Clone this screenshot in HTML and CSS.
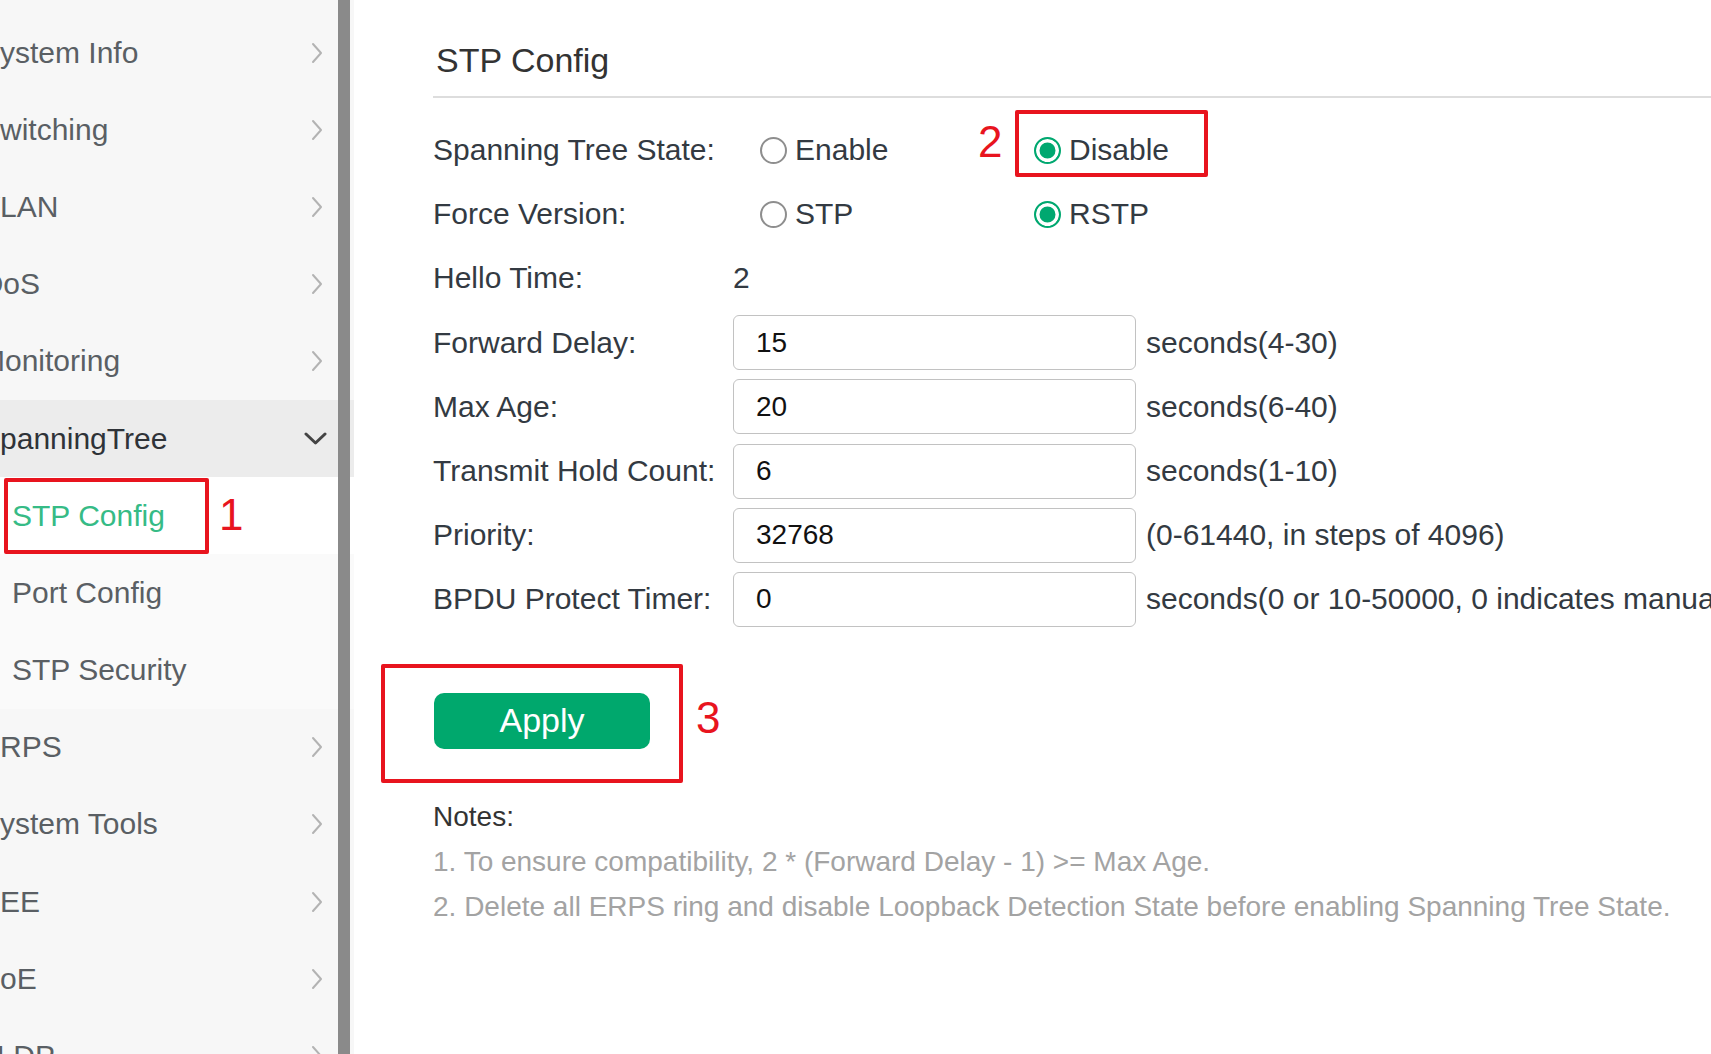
FILE: index.html
```html
<!DOCTYPE html>
<html lang="en">
<head>
<meta charset="utf-8">
<title>STP Config</title>
<link rel="stylesheet" href="styles.css">
</head>
<body>
<div class="app">
  <aside class="sidebar">
    <ul class="nav">
      <li class="nav-item"><span class="nav-label">System Info</span><svg class="chev" viewBox="0 0 12 22"><polyline points="2,2 10,11 2,20"/></svg></li>
      <li class="nav-item"><span class="nav-label">Switching</span><svg class="chev" viewBox="0 0 12 22"><polyline points="2,2 10,11 2,20"/></svg></li>
      <li class="nav-item"><span class="nav-label">VLAN</span><svg class="chev" viewBox="0 0 12 22"><polyline points="2,2 10,11 2,20"/></svg></li>
      <li class="nav-item"><span class="nav-label">QoS</span><svg class="chev" viewBox="0 0 12 22"><polyline points="2,2 10,11 2,20"/></svg></li>
      <li class="nav-item"><span class="nav-label">Monitoring</span><svg class="chev" viewBox="0 0 12 22"><polyline points="2,2 10,11 2,20"/></svg></li>
      <li class="nav-item open"><span class="nav-label">SpanningTree</span><svg class="chev-down" viewBox="0 0 23 14"><polyline points="2,2 11.5,11 21,2"/></svg></li>
      <li class="sub-item active"><span class="sub-label">STP Config</span><span class="annot-box box-1"></span><span class="annot-num num-1">1</span></li>
      <li class="sub-item"><span class="sub-label">Port Config</span></li>
      <li class="sub-item"><span class="sub-label">STP Security</span></li>
      <li class="nav-item"><span class="nav-label">ERPS</span><svg class="chev" viewBox="0 0 12 22"><polyline points="2,2 10,11 2,20"/></svg></li>
      <li class="nav-item"><span class="nav-label">System Tools</span><svg class="chev" viewBox="0 0 12 22"><polyline points="2,2 10,11 2,20"/></svg></li>
      <li class="nav-item"><span class="nav-label">EEE</span><svg class="chev" viewBox="0 0 12 22"><polyline points="2,2 10,11 2,20"/></svg></li>
      <li class="nav-item"><span class="nav-label">PoE</span><svg class="chev" viewBox="0 0 12 22"><polyline points="2,2 10,11 2,20"/></svg></li>
      <li class="nav-item"><span class="nav-label">LLDP</span><svg class="chev" viewBox="0 0 12 22"><polyline points="2,2 10,11 2,20"/></svg></li>
    </ul>
    <div class="scrollbar"></div>
  </aside>

  <main class="main">
    <h1 class="title">STP Config</h1>
    <div class="divider"></div>

    <div class="form">
      <div class="row">
        <div class="label">Spanning Tree State:</div>
        <div class="radio-group">
          <label class="radio-opt"><span class="radio"></span><span class="radio-text">Enable</span></label>
          <label class="radio-opt"><span class="radio checked"></span><span class="radio-text">Disable</span><span class="annot-box box-2"></span><span class="annot-num num-2">2</span></label>
        </div>
      </div>
      <div class="row">
        <div class="label">Force Version:</div>
        <div class="radio-group">
          <label class="radio-opt"><span class="radio"></span><span class="radio-text">STP</span></label>
          <label class="radio-opt"><span class="radio checked"></span><span class="radio-text">RSTP</span></label>
        </div>
      </div>
      <div class="row">
        <div class="label">Hello Time:</div>
        <div class="value">2</div>
      </div>
      <div class="row">
        <div class="label">Forward Delay:</div>
        <div class="field">15</div>
        <div class="hint">seconds(4-30)</div>
      </div>
      <div class="row">
        <div class="label">Max Age:</div>
        <div class="field">20</div>
        <div class="hint">seconds(6-40)</div>
      </div>
      <div class="row">
        <div class="label">Transmit Hold Count:</div>
        <div class="field">6</div>
        <div class="hint">seconds(1-10)</div>
      </div>
      <div class="row">
        <div class="label">Priority:</div>
        <div class="field">32768</div>
        <div class="hint">(0-61440, in steps of 4096)</div>
      </div>
      <div class="row">
        <div class="label">BPDU Protect Timer:</div>
        <div class="field">0</div>
        <div class="hint">seconds(0 or 10-50000, 0 indicates manual recovery)</div>
      </div>
    </div>

    <div class="apply-wrap">
      <button class="apply">Apply</button>
      <span class="annot-box box-3"></span>
      <span class="annot-num num-3">3</span>
    </div>

    <div class="notes">
      <div class="notes-title">Notes:</div>
      <div class="note">1. To ensure compatibility, 2 * (Forward Delay - 1) &gt;= Max Age.</div>
      <div class="note">2. Delete all ERPS ring and disable Loopback Detection State before enabling Spanning Tree State.</div>
    </div>
  </main>
</div>
</body>
</html>
```
FILE: styles.css
```css
* { box-sizing: border-box; }

html, body {
  margin: 0;
  padding: 0;
  background: #ffffff;
}

body {
  width: 1711px;
  height: 1054px;
  overflow: hidden;
  font-family: "Liberation Sans", Arial, sans-serif;
  color: #333333;
}

.app {
  display: flex;
  height: 1054px;
}

/* ---------- Sidebar ---------- */
.sidebar {
  position: relative;
  width: 354px;
  flex: 0 0 354px;
  height: 100%;
  background: #f7f7f7;
  overflow: hidden;
}

.nav {
  list-style: none;
  margin: 0;
  padding: 14px 0 0 0;
}

.nav-item,
.sub-item {
  position: relative;
  height: 77.2px;
  display: flex;
  align-items: center;
  justify-content: space-between;
  font-size: 30px;
  white-space: nowrap;
}

.nav-item {
  padding-right: 31px;
  color: #5a5f64;
}

.nav-label {
  margin-left: -20px;
}

.nav-item.open {
  background: #ececec;
  color: #2f3338;
}

.chev {
  width: 12px;
  height: 22px;
  flex: 0 0 auto;
}

.chev polyline {
  fill: none;
  stroke: #b3b3b3;
  stroke-width: 2;
  stroke-linecap: round;
  stroke-linejoin: round;
}

.chev-down {
  width: 23px;
  height: 14px;
  margin-right: -4px;
  flex: 0 0 auto;
}

.chev-down polyline {
  fill: none;
  stroke: #444444;
  stroke-width: 3;
  stroke-linecap: round;
  stroke-linejoin: round;
}

.sub-item {
  background: #fafafa;
  color: #5a5f64;
  justify-content: flex-start;
}

.sub-label {
  margin-left: 12px;
}

.sub-item.active {
  background: #ffffff;
  color: #36bb86;
}

.scrollbar {
  position: absolute;
  top: 0;
  left: 338px;
  width: 12px;
  height: 100%;
  background: #8a8a8a;
}

/* ---------- Annotations ---------- */
.annot-box {
  position: absolute;
  border: 4px solid #e8141e;
  border-radius: 2px;
  pointer-events: none;
}

.annot-num {
  position: absolute;
  font-family: "Liberation Sans", Arial, sans-serif;
  font-size: 44px;
  line-height: 44px;
  color: #e8141e;
}

.box-1 { left: 4px; top: 1px; width: 205px; height: 76px; }
.num-1 { left: 219px; top: 16px; }

.box-2 { left: -19px; top: -8px; width: 193px; height: 67px; }
.num-2 { left: -56px; top: 2px; }

.box-3 { left: -53px; top: -29px; width: 302px; height: 119px; }
.num-3 { left: 262px; top: 3px; }

/* ---------- Main ---------- */
.main {
  flex: 1 1 auto;
  min-width: 0;
  overflow: hidden;
  padding: 40px 0 0 79px;
}

.title {
  margin: 0;
  font-size: 34px;
  line-height: 40px;
  font-weight: normal;
  color: #333333;
  padding-left: 3px;
}

.divider {
  margin-top: 16px;
  height: 2px;
  background: #dddddd;
}

.form {
  margin-top: 20px;
}

.row {
  display: flex;
  align-items: center;
  height: 64.2px;
  font-size: 30px;
  white-space: nowrap;
}

.label {
  width: 300px;
  flex: 0 0 300px;
  color: #333a42;
}

.value {
  color: #333a42;
}

.radio-group {
  display: flex;
  padding-left: 27px;
}

.radio-opt {
  position: relative;
  display: flex;
  align-items: center;
  gap: 8px;
  width: 274px;
  height: 64.2px;
  color: #333a42;
}

.radio {
  width: 27px;
  height: 27px;
  border: 2px solid #8e8e8e;
  border-radius: 50%;
  background: #ffffff;
  flex: 0 0 auto;
}

.radio.checked {
  border: 2.5px solid #00a870;
  background: #00a870;
  box-shadow: inset 0 0 0 3.5px #ffffff;
}

.field {
  width: 403px;
  height: 55px;
  flex: 0 0 403px;
  border: 1.5px solid #c2c2c2;
  border-radius: 6px;
  padding-left: 22px;
  display: flex;
  align-items: center;
  font-size: 28px;
  color: #111111;
  background: #ffffff;
}

.hint {
  margin-left: 10px;
  color: #333a42;
}

.apply-wrap {
  position: relative;
  margin-top: 61px;
  width: 216px;
  height: 56px;
  margin-left: 1px;
}

.apply {
  display: block;
  width: 216px;
  height: 56px;
  border: none;
  border-radius: 10px;
  background: #00a86d;
  color: #ffffff;
  font-family: "Liberation Sans", Arial, sans-serif;
  font-size: 34px;
  padding: 0;
}

.notes {
  margin-top: 45px;
  font-size: 28px;
  line-height: 45px;
  white-space: nowrap;
}

.notes-title {
  color: #333333;
}

.note {
  color: #a3a3a3;
}
```
